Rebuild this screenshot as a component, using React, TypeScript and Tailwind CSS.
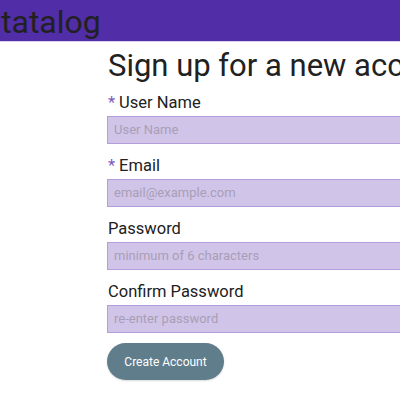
export default function App() {
  const fields = [
    { label: 'User Name', required: true, placeholder: 'User Name', type: 'text' },
    { label: 'Email', required: true, placeholder: 'email@example.com', type: 'email' },
    { label: 'Password', required: false, placeholder: 'minimum of 6 characters', type: 'password' },
    { label: 'Confirm Password', required: false, placeholder: 're-enter password', type: 'password' },
  ];

  return (
    <div className="w-[400px] h-[400px] overflow-hidden bg-white font-['Roboto','Liberation_Sans',sans-serif]">
      {/* Barre du haut */}
      <div className="h-[42px] bg-[#512da8] border-b border-[#d9d0ee] pt-[4px] whitespace-nowrap">
        <span className="text-[32px] leading-[37px] text-[#212121] ml-[1px]">tatalog</span>
      </div>

      <div className="pl-[108px] pt-[6px] w-[700px]">
        <h1 className="text-[31px] leading-[36px] text-[#212121] whitespace-nowrap">
          Sign up for a new account
        </h1>

        <form className="mt-[9px] flex flex-col" onSubmit={(e) => e.preventDefault()}>
          {fields.map((f) => (
            <div key={f.label} className="flex flex-col mb-[12.5px]">
              <label className="text-[16.5px] leading-[19.5px] text-[#212121] whitespace-nowrap">
                {f.required && <span className="text-[#7e57c2] mr-[4px]">*</span>}
                {f.label}
              </label>
              <input
                type={f.type}
                placeholder={f.placeholder}
                className="-ml-[1px] mt-[3px] h-[28px] w-[600px] bg-[#d1c4e9] border border-[#b39ddb] px-[6px] text-[13px] text-[#555] placeholder:text-[#a89fb6] outline-none"
              />
            </div>
          ))}

          <button
            type="submit"
            className="-ml-[1px] mt-[-2px] w-[117px] h-[37px] rounded-full bg-[#607d8b] text-white text-[12px] shadow-[0_1px_2px_rgba(0,0,0,0.15)]"
          >
            Create Account
          </button>
        </form>
      </div>
    </div>
  );
}
